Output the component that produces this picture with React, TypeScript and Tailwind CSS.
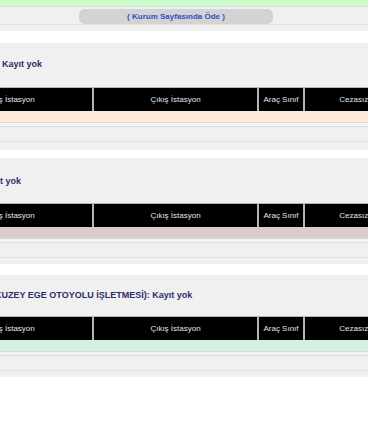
import type { ReactNode } from "react"

type SectionProps = {
  title: ReactNode
  rowColor: string
  panelClass: string
  headerClass: string
  footClass: string
}

function Section({ title, rowColor, panelClass, headerClass, footClass }: SectionProps) {
  return (
    <div className={`bg-[#f0f0f0] ${panelClass}`}>
      <div className="h-[10px] text-[9px] leading-[10px] font-bold text-[#2d2d6a] whitespace-nowrap">
        {title}
      </div>

      {/* table header */}
      <div className={`-ml-[71px] flex gap-[2px] bg-[#b4b4b4] pt-[1px] w-[700px] ${headerClass}`}>
        {[
          ["Giriş İstasyon", "w-[163px]"],
          ["Çıkış İstasyon", "w-[163px]"],
          ["Araç Sınıf", "w-[44px]"],
          ["Cezasız Tutar", "w-[118px]"],
          ["Cezalı Tutar", "w-[100px]"],
        ].map(([label, w]) => (
          <div
            key={label}
            className={`${w} h-[23px] shrink-0 bg-black flex items-center justify-center text-[8px] text-[#e4e4ec] whitespace-nowrap`}
          >
            {label}
          </div>
        ))}
      </div>

      {/* empty result row */}
      <div className={`h-[11px] ${rowColor}`} />
      <div className="h-[1px] bg-[#dadada]" />
      <div className="h-[3px] bg-[#f3f3f3]" />
      <div className="h-[16px] border-y border-[#e0e0e0] bg-[#f0f0f0]" />
      <div className={footClass} />
    </div>
  )
}

export default function App() {
  return (
    <div className="w-[368px] h-[445px] overflow-hidden bg-white font-['Liberation_Sans',Arial,sans-serif]">
      {/* top status strip */}
      <div className="h-[6px] bg-[#ccfccc]" />
      <div className="h-[1px] bg-[#dcdcdc]" />

      {/* pay button bar */}
      <div className="bg-[#f0f0f0]">
        <div className="h-[18px] flex items-end justify-center border-b border-[#e2e2e2]">
          <button className="mr-[16px] w-[194px] h-[15px] rounded-[6px] bg-[#d3d3d3] text-[8px] font-bold text-[#2a50c8] leading-[15px]">
            ( Kurum Sayfasında Öde )
          </button>
        </div>
        <div className="h-[6px]" />
      </div>

      <div className="h-[12px]" />

      <Section
        title={<span className="ml-[2px]">Kayıt yok</span>}
        rowColor="bg-[#fdead8]"
        panelClass="pt-[16px]"
        headerClass="mt-[18px]"
        footClass="h-[8px]"
      />

      <div className="h-[8px]" />

      <Section
        title={<span className="-ml-[19px]">Kayıt yok</span>}
        rowColor="bg-[#d8cccc]"
        panelClass="pt-[18px]"
        headerClass="mt-[17px]"
        footClass="h-[6px]"
      />

      <div className="h-[11px]" />

      <Section
        title={<span className="-ml-[5px]">KUZEY EGE OTOYOLU İŞLETMESİ): Kayıt yok</span>}
        rowColor="bg-[#d4f2e1]"
        panelClass="pt-[15px]"
        headerClass="mt-[16px]"
        footClass="h-[6px]"
      />
    </div>
  )
}
